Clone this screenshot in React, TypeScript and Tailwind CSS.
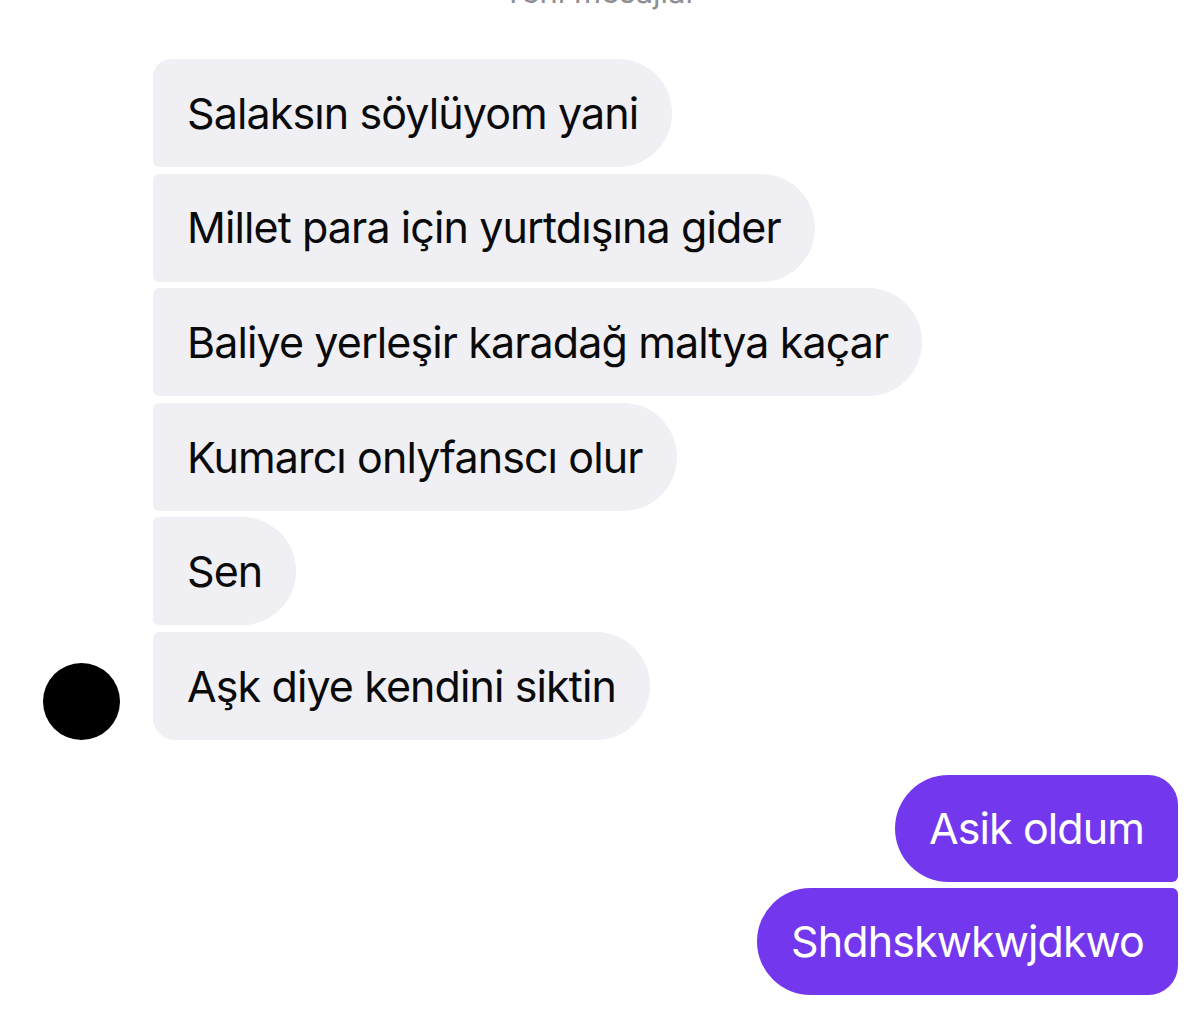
import React from "react";

const incoming = [
  "Salaksın söylüyom yani",
  "Millet para için yurtdışına gider",
  "Baliye yerleşir karadağ maltya kaçar",
  "Kumarcı onlyfanscı olur",
  "Sen",
  "Aşk diye kendini siktin",
];

const outgoing = ["Asik oldum", "Shdhskwkwjdkwo"];

const App = () => {
  return (
    <div className="w-[1200px] h-[1010px] bg-white overflow-hidden font-['Inter','Liberation_Sans',sans-serif]">
      {/* Divider label, cut at the top edge */}
      <div className="h-[59px] flex justify-center">
        <span className="-mt-[26px] text-[31px] leading-[36px] text-[#8e8e93]">Yeni mesajlar</span>
      </div>

      {/* Incoming group */}
      <div className="flex items-end">
        <div className="w-[153px] shrink-0 flex justify-start pl-[43px]">
          <div className="w-[77px] h-[77px] rounded-full bg-black" />
        </div>
        <div className="flex flex-col items-start gap-[6.6px]">
          {incoming.map((text, i) => {
            const first = i === 0;
            const last = i === incoming.length - 1;
            return (
              <div
                key={i}
                className={`h-[108px] flex items-center px-[34px] bg-[#efeff4] text-[#0a0a0a] text-[43px] tracking-[-0.9px] rounded-r-[54px] ${
                  first
                    ? "rounded-tl-[18px] rounded-bl-[6px]"
                    : last
                    ? "rounded-tl-[6px] rounded-bl-[22px]"
                    : "rounded-l-[6px]"
                }`}
              >
                {text}
              </div>
            );
          })}
        </div>
      </div>

      {/* Outgoing group */}
      <div className="mt-[35px] pr-[22px] flex flex-col items-end gap-[6px]">
        {outgoing.map((text, i) => (
          <div
            key={i}
            className={`h-[107px] flex items-center px-[34px] bg-[#7338ee] text-white text-[43px] tracking-[-0.9px] rounded-l-[54px] ${
              i === 0 ? "rounded-tr-[30px] rounded-br-[6px]" : "rounded-tr-[6px] rounded-br-[30px]"
            }`}
          >
            {text}
          </div>
        ))}
      </div>
    </div>
  );
};

export default App;
